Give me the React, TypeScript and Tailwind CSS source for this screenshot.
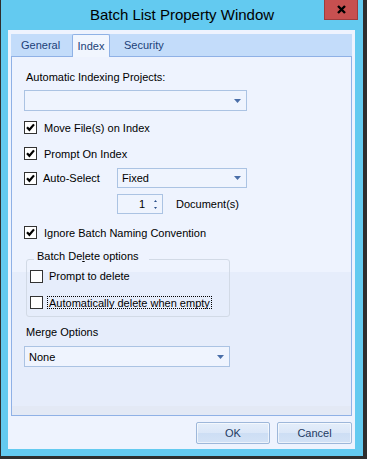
import React from 'react';

const Check = ({ checked }: { checked: boolean }) => (
  <span className="flex h-[13px] w-[13px] shrink-0 items-center justify-center border border-[#333333] bg-white">
    {checked && (
      <svg width="11" height="11" viewBox="0 0 11 11">
        <path d="M2 5.2 L4.4 7.8 L9 2.4" fill="none" stroke="#000" strokeWidth="2.2" />
      </svg>
    )}
  </span>
);

const Arrow = () => (
  <svg width="7" height="4" viewBox="0 0 7 4" className="shrink-0">
    <path d="M0 0h7L3.5 4z" fill="#4a6ea8" />
  </svg>
);

const Combo = ({ value, className }: { value?: string; className: string }) => (
  <div className={`flex items-center justify-between border border-[#abc3e3] bg-[#eff4fe] pl-[4px] pr-[5px] ${className}`}>
    <span>{value}</span>
    <Arrow />
  </div>
);

const CheckRow = ({ label, className }: { label: string; className: string }) => (
  <div className={`flex h-[13px] items-center gap-[7px] ${className}`}>
    <Check checked />
    <span>{label}</span>
  </div>
);

const Button = ({ label, className }: { label: string; className: string }) => (
  <button className={`flex h-[22px] items-center justify-center rounded-[2px] border border-[#9db7da] bg-[linear-gradient(to_bottom,#e4eefa_0%,#dbe7f8_50%,#cddef4_50%,#d3e2f6_100%)] text-[#1e3a62] shadow-[inset_0_0_0_1px_rgba(255,255,255,0.6)] ${className}`}>
    {label}
  </button>
);

export default function App() {
  return (
    <div className="flex h-[459px] w-[367px] flex-col border-b-[3px] border-l border-r-4 border-[#2e2e2e] bg-[#63caf0] font-['Liberation_Sans',Arial,sans-serif] text-[11px] leading-[14px] text-black">
      {/* title bar */}
      <div className="flex h-[30px] shrink-0 items-start">
        <div className="flex h-[30px] flex-1 items-center justify-center pl-[39px] text-[15px] leading-[18px] text-black">
          Batch List Property Window
        </div>
        <div className="mr-[5px] flex h-[20px] w-[34px] items-center justify-center border-x border-b border-[#9e3c3c] bg-[#c75050]">
          <svg width="9" height="9" viewBox="0 0 9 9">
            <path d="M1 1L8 8M8 1L1 8" stroke="#000" strokeWidth="2.4" />
          </svg>
        </div>
      </div>

      {/* client */}
      <div className="ml-[7px] mr-[8px] flex h-[419px] flex-col bg-[#eef3fe] px-[3px] pt-[4px]">
        {/* tab strip */}
        <div className="flex h-[22px] shrink-0 items-stretch bg-[#c3dcfa] text-[#1b3f78]">
          <div className="flex w-[61px] items-center pl-[10px]">General</div>
          <div className="relative z-10 -mb-px flex h-[23px] w-[38px] items-center justify-center rounded-t-[2px] border-x border-t border-[#8fb2e6] bg-[#f1f6fe] pb-px">
            Index
          </div>
          <div className="flex items-center pl-[14px]">Security</div>
        </div>

        {/* tab page */}
        <div className="flex h-[360px] shrink-0 flex-col border border-[#8fb1e6] bg-[linear-gradient(to_bottom,#eef3fe_0%,#eef3fe_60%,#e6edfb_60%,#e6edfb_97.5%,#e3e9f5_97.5%)]">
          <div className="ml-[14px] mt-[13px] h-[14px]">Automatic Indexing Projects:</div>
          <Combo className="ml-[12px] mt-[6px] h-[21px] w-[223px]" />
          <CheckRow label="Move File(s) on Index" className="ml-[12px] mt-[10px]" />
          <CheckRow label="Prompt On Index" className="ml-[12px] mt-[13px]" />

          <div className="ml-[12px] mt-[8px] flex h-[20px] items-center">
            <div className="flex w-[93px] items-center gap-[6px]">
              <Check checked />
              <span>Auto-Select</span>
            </div>
            <Combo value="Fixed" className="h-[20px] w-[130px]" />
          </div>

          <div className="ml-[105px] mt-[6px] flex h-[20px] items-center gap-[13px]">
            <div className="flex h-[20px] w-[46px] items-center justify-end border border-[#abc3e3] bg-[#eff4fe] pr-[5px]">
              <span className="mr-[9px]">1</span>
              <div className="flex flex-col items-center gap-[5px]">
                <svg width="3" height="2" viewBox="0 0 3 2"><path d="M0 2h3L1.5 0z" fill="#2a4f8a" /></svg>
                <svg width="3" height="2" viewBox="0 0 3 2"><path d="M0 0h3L1.5 2z" fill="#2a4f8a" /></svg>
              </div>
            </div>
            <span>Document(s)</span>
          </div>

          <CheckRow label="Ignore Batch Naming Convention" className="ml-[12px] mt-[12px]" />

          <fieldset className="ml-[14px] mt-[10px] w-[204px] rounded-[3px] border border-[#d2dae6] pb-[7px] pl-[3px]">
            <legend className="ml-[4px] h-[20px] pl-[3px] pr-[10px] leading-[14px]">
              Batch De<span className="underline">l</span>ete options
            </legend>
            <div className="mt-[1px] flex h-[13px] items-center gap-[4px]">
              <Check checked={false} />
              <span className="border border-transparent px-[1px] leading-[11px]">Prompt to delete</span>
            </div>
            <div className="mt-[13px] flex h-[13px] items-center gap-[4px]">
              <Check checked={false} />
              <span className="flex h-[13px] items-center border border-dotted border-black px-[1px]">Automatically delete when empty</span>
            </div>
          </fieldset>

          <div className="ml-[14px] mt-[8px] h-[14px]">Merge Options</div>
          <Combo value="None" className="ml-[12px] mt-[7px] h-[21px] w-[206px]" />
        </div>

        {/* footer */}
        <div className="flex justify-end gap-[7px] pt-[6px]">
          <Button label="OK" className="w-[74px]" />
          <Button label="Cancel" className="w-[75px]" />
        </div>
      </div>
    </div>
  );
}
